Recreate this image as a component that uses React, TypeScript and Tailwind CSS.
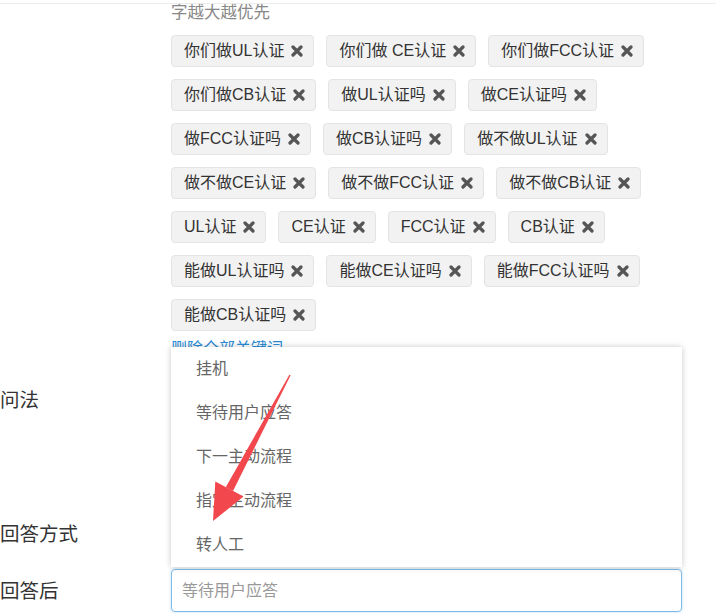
const tags: string[] = [
  "你们做UL认证",
  "你们做 CE认证",
  "你们做FCC认证",
  "你们做CB认证",
  "做UL认证吗",
  "做CE认证吗",
  "做FCC认证吗",
  "做CB认证吗",
  "做不做UL认证",
  "做不做CE认证",
  "做不做FCC认证",
  "做不做CB认证",
  "UL认证",
  "CE认证",
  "FCC认证",
  "CB认证",
  "能做UL认证吗",
  "能做CE认证吗",
  "能做FCC认证吗",
  "能做CB认证吗",
];

const options = ["挂机", "等待用户应答", "下一主动流程", "指定主动流程", "转人工"];

function TimesIcon() {
  return (
    <svg width="12" height="12" viewBox="0 0 12 12" className="shrink-0">
      <path
        d="M2 2 L10 10 M10 2 L2 10"
        stroke="#555"
        strokeWidth="3.2"
        strokeLinecap="round"
      />
    </svg>
  );
}

function Tag({ label }: { label: string }) {
  return (
    <span className="flex h-[32px] items-center rounded-[4px] border border-[#e4e4e4] bg-[#f2f2f2] pl-[12px] pr-[10px] text-[16px] leading-[30px] text-[#333]">
      <span className="whitespace-pre">{label}</span>
      <span className="ml-[7px]">
        <TimesIcon />
      </span>
    </span>
  );
}

export default function App() {
  return (
    <div
      className="relative h-[613px] w-[716px] overflow-hidden bg-white"
      style={{ fontFamily: '"Liberation Sans", "Noto Sans CJK SC", sans-serif' }}
    >
      <div className="grid grid-cols-[171px_511px]">
        {/* keywords */}
        <div />
        <div className="pt-[1px]">
          <p className="text-[16.5px] leading-[22px] text-[#888]">字越大越优先</p>
          <div className="mt-[12px] flex flex-wrap gap-x-[12px] gap-y-[12px]">
            {tags.map((t) => (
              <Tag key={t} label={t} />
            ))}
          </div>
          <a className="mt-[7px] block text-[16px] leading-[22px] text-[#2a8ad4]">
            删除全部关键词
          </a>
        </div>

        {/* 问法 */}
        <div className="h-[151px] pt-[27px] text-[19.5px] leading-[26px] text-[#333]">问法</div>
        <div />

        {/* 回答方式 */}
        <div className="flex h-[44px] items-center pt-[3px] text-[19.5px] text-[#333]">回答方式</div>
        <div />

        {/* 回答后 */}
        <div className="mt-[14px] flex h-[43px] items-center pt-[2px] text-[19.5px] text-[#333]">回答后</div>
        <div className="mt-[14px]">
          <input
            className="h-[43px] w-full rounded-[4px] border border-[#7fbbe8] pl-[10px] text-[16px] text-[#333] shadow-[0_0_3px_rgba(102,175,233,0.45)] outline-none placeholder:text-[#999]"
            placeholder="等待用户应答"
          />
        </div>
      </div>

      {/* top rule */}
      <div className="absolute left-0 right-0 top-[3px] h-px bg-[#ececec]" />

      {/* open dropdown menu */}
      <div className="absolute left-[171px] top-[347px] w-[511px] bg-white shadow-[0_0_6px_rgba(0,0,0,0.22)]">
        {options.map((o) => (
          <div key={o} className="flex h-[44px] items-center pl-[25px] text-[16px] text-[#666]">
            {o}
          </div>
        ))}
      </div>

      {/* red annotation arrow */}
      <svg className="pointer-events-none absolute left-0 top-0" width="716" height="613">
        <polygon
          points="290.6,375.3 289.4,374.7 225.8,487.2 233,491"
          fill="#f2474d"
        />
        <polygon points="213,521 215.3,481.6 243.5,496.6" fill="#f2474d" />
      </svg>
    </div>
  );
}
